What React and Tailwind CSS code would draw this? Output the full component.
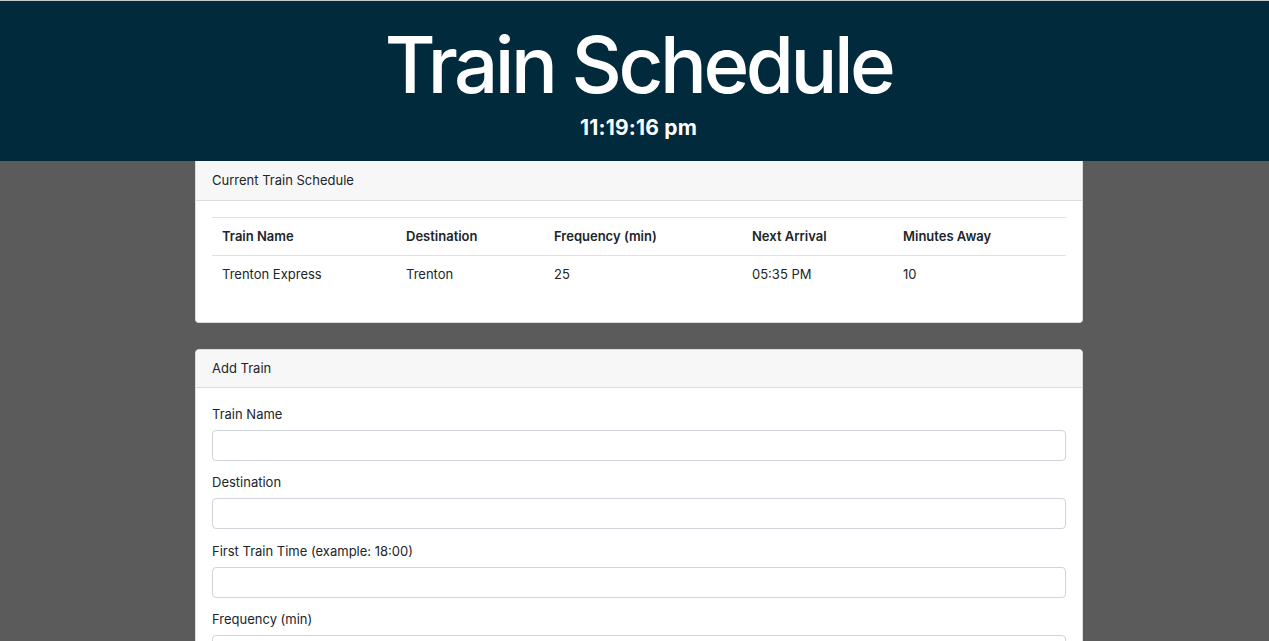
export default function App() {
  const rows = [
    { name: "Trenton Express", dest: "Trenton", freq: "25", next: "05:35 PM", away: "10" },
  ];
  const fields = ["Train Name", "Destination", "First Train Time (example: 18:00)", "Frequency (min)"];

  return (
    <div className="min-h-screen w-full bg-[#5b5b5b] font-['Inter','Liberation_Sans',sans-serif] text-[13px] text-[#212529]">
      <header className="h-[161px] border-t border-[#c8c8c8] bg-[#012a3c] pl-[8px] pt-[16px] text-center text-white">
        <h1 className="text-[78px] font-medium leading-[96px] tracking-[-3.5px]">Train Schedule</h1>
        <div className="mt-[2px] text-[21px] font-bold leading-[26px] tracking-[0.2px]">11:19:16 pm</div>
      </header>

      <main className="ml-[195px] w-[888px]">
        <section className="rounded-b-[4px] border border-t-0 border-[#dcdcdc] bg-white">
          <div className="border-b border-[#dcdcdc] bg-[#f7f7f7] px-[16px] py-[10px] leading-[19px]">
            Current Train Schedule
          </div>
          <div className="px-[16px] pb-[28px] pt-[16px]">
            <table className="w-full border-collapse text-left">
              <thead>
                <tr className="border-t border-b border-[#dee2e6]">
                  <th className="h-[38px] w-[184px] px-[10px] font-semibold">Train Name</th>
                  <th className="h-[38px] w-[148px] px-[10px] font-semibold">Destination</th>
                  <th className="h-[38px] w-[198px] px-[10px] font-semibold">Frequency (min)</th>
                  <th className="h-[38px] w-[151px] px-[10px] font-semibold">Next Arrival</th>
                  <th className="h-[38px] px-[10px] font-semibold">Minutes Away</th>
                </tr>
              </thead>
              <tbody>
                {rows.map((r) => (
                  <tr key={r.name}>
                    <td className="h-[38px] px-[10px]">{r.name}</td>
                    <td className="h-[38px] px-[10px]">{r.dest}</td>
                    <td className="h-[38px] px-[10px]">{r.freq}</td>
                    <td className="h-[38px] px-[10px]">{r.next}</td>
                    <td className="h-[38px] px-[10px]">{r.away}</td>
                  </tr>
                ))}
              </tbody>
            </table>
          </div>
        </section>

        <section className="mt-[26px] rounded-[4px] border border-[#dcdcdc] bg-white">
          <div className="rounded-t-[4px] border-b border-[#dcdcdc] bg-[#f7f7f7] px-[16px] py-[9px] leading-[19px]">
            Add Train
          </div>
          <form className="px-[16px] pb-[16px] pt-[16px]">
            {fields.map((f) => (
              <div key={f} className="mb-[11.6px]">
                <label className="mb-[6px] block leading-[20px]">{f}</label>
                <input
                  type="text"
                  className="block h-[31px] w-full rounded-[4px] border border-[#ced4da] bg-white px-[10px]"
                />
              </div>
            ))}
          </form>
        </section>
      </main>
    </div>
  );
}
